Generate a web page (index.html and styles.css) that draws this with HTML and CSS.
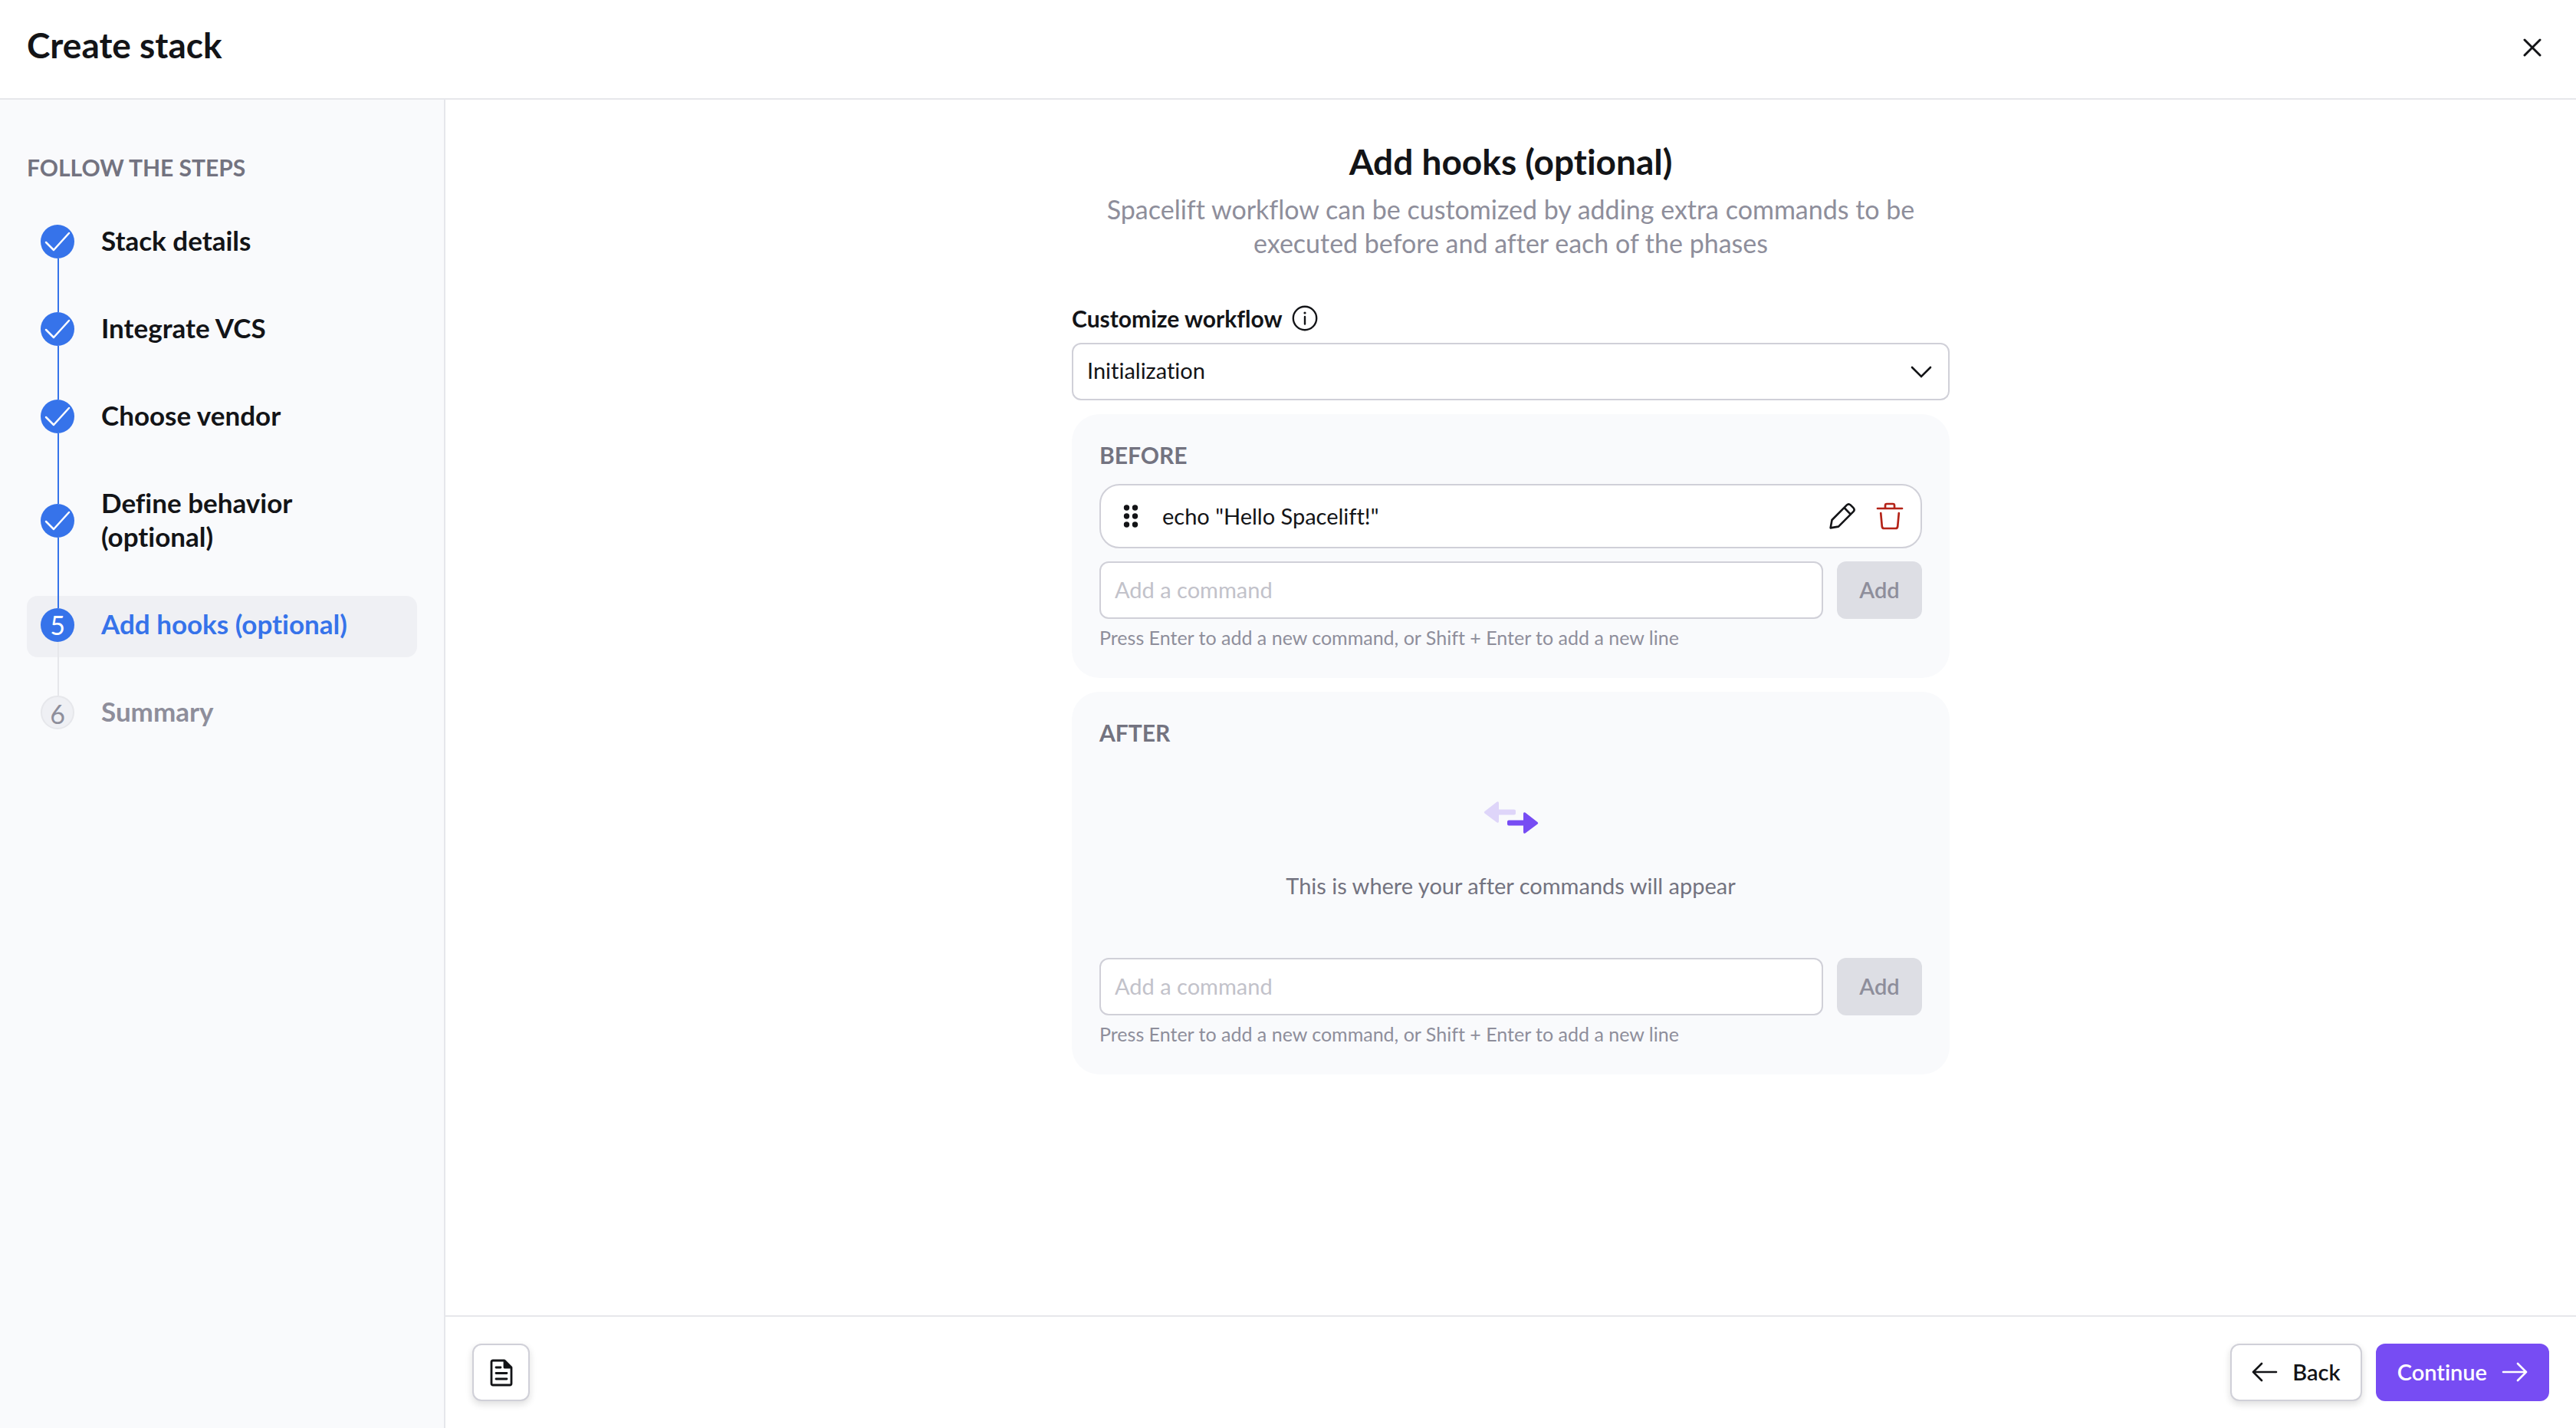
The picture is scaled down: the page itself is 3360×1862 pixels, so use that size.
FILE: index.html
```html
<!DOCTYPE html>
<html lang="en">
<head>
<meta charset="utf-8">
<meta name="viewport" content="width=device-width, initial-scale=1">
<title>Create stack</title>
<link rel="stylesheet" href="styles.css">
</head>
<body>
<div class="page">
  <header class="topbar">
    <h1 class="title">Create stack</h1>
    <button class="close" type="button" aria-label="Close">
      <svg width="24" height="24" viewBox="0 0 24 24" fill="none" stroke="currentColor" stroke-width="3" stroke-linecap="round"><path d="M2 2l20 20M22 2L2 22"/></svg>
    </button>
  </header>

  <div class="layout">
    <nav class="sidebar" aria-label="Steps">
      <h2 class="overline">FOLLOW THE STEPS</h2>
      <ol class="steps">
        <li class="step done">
          <span class="marker"><svg width="34" height="26" viewBox="0 0 34 26"><path d="M2 14l10 10L32 2"/></svg></span>
          <span class="step-label">Stack details</span>
        </li>
        <li class="step done">
          <span class="marker"><svg width="34" height="26" viewBox="0 0 34 26"><path d="M2 14l10 10L32 2"/></svg></span>
          <span class="step-label">Integrate VCS</span>
        </li>
        <li class="step done">
          <span class="marker"><svg width="34" height="26" viewBox="0 0 34 26"><path d="M2 14l10 10L32 2"/></svg></span>
          <span class="step-label">Choose vendor</span>
        </li>
        <li class="step done tall">
          <span class="marker"><svg width="34" height="26" viewBox="0 0 34 26"><path d="M2 14l10 10L32 2"/></svg></span>
          <span class="step-label">Define behavior<br>(optional)</span>
        </li>
        <li class="step current" aria-current="step">
          <span class="marker">5</span>
          <span class="step-label">Add hooks (optional)</span>
        </li>
        <li class="step upcoming">
          <span class="marker">6</span>
          <span class="step-label">Summary</span>
        </li>
      </ol>
    </nav>

    <main class="main">
      <form class="form" id="hooks">
        <h2 class="title">Add hooks (optional)</h2>
        <p class="lead">Spacelift workflow can be customized by adding extra commands to be<br>executed before and after each of the phases</p>

        <div class="field-head">
          <label for="phase">Customize workflow</label>
          <svg width="34" height="34" viewBox="0 0 34 34" fill="none" stroke="currentColor" stroke-width="2.4" stroke-linecap="round"><circle cx="17" cy="17" r="15.2"/><path d="M17 15v9.500"/><circle cx="17" cy="10" r="1.600" fill="currentColor" stroke="none"/></svg>
        </div>
        <div class="select">
          <select id="phase"><option>Initialization</option></select>
          <svg class="chevron" width="28" height="18" viewBox="0 0 28 18" fill="none" stroke="currentColor" stroke-width="2.600" stroke-linecap="round"><path d="M2 3l12 12L26 3"/></svg>
        </div>

        <section class="card">
          <h3 class="overline">BEFORE</h3>
          <div class="command">
            <svg width="20" height="32" viewBox="0 0 20 32" fill="currentColor"><circle cx="4.500" cy="5" r="3.700"/><circle cx="15.500" cy="5" r="3.700"/><circle cx="4.500" cy="16" r="3.700"/><circle cx="15.500" cy="16" r="3.700"/><circle cx="4.500" cy="27" r="3.700"/><circle cx="15.500" cy="27" r="3.700"/></svg>
            <span class="command-text">echo "Hello Spacelift!"</span>
            <button class="icon-button" type="button" aria-label="Edit">
              <svg width="36" height="36" viewBox="0 0 36 36" fill="none" stroke="currentColor" stroke-width="2.600" stroke-linejoin="round"><path d="M2.600 33.400L4.500 23 24 3.400q2.200-2.200 4.600 0L32.400 7.200q2.400 2.400 0 5L13 31.600z M20.500 7L28.800 15.600"/></svg>
            </button>
            <button class="icon-button danger" type="button" aria-label="Delete">
              <svg width="36" height="36" viewBox="0 0 36 36" fill="none" stroke="currentColor" stroke-width="2.700" stroke-linecap="round" stroke-linejoin="round"><path d="M2 8h32M12 8V4q0-2 2-2h8q2 0 2 2v4M6.200 14l1.600 17.500q.3 2.500 2.700 2.500h15q2.400 0 2.700-2.500L29.800 14"/></svg>
            </button>
          </div>
          <div class="entry">
            <input type="text" aria-label="Before command" placeholder="Add a command">
            <button class="button disabled" type="button" disabled>Add</button>
          </div>
          <p class="hint">Press Enter to add a new command, or Shift + Enter to add a new line</p>
        </section>

        <section class="card">
          <h3 class="overline">AFTER</h3>
          <div class="empty">
            <svg width="72" height="44" viewBox="0 0 72 44"><path fill="#ded5f9" d="M1.500 14L17.600 1.600Q20 .5 20 3v8.500h20q2 0 2 2v3q0 2-2 2H20V27q0 2.500-2.400 1.400L1.500 16.500q-1.500-1.200 0-2.500z"/><path fill="#774cf3" d="M70.500 28L54.400 15.600Q52 14.500 52 17v8.500H33q-2 0-2 2v3q0 2 2 2h19V41q0 2.500 2.400 1.400L70.500 30.500q1.500-1.200 0-2.500z"/></svg>
            <p>This is where your after commands will appear</p>
          </div>
          <div class="entry">
            <input type="text" aria-label="After command" placeholder="Add a command">
            <button class="button disabled" type="button" disabled>Add</button>
          </div>
          <p class="hint">Press Enter to add a new command, or Shift + Enter to add a new line</p>
        </section>
      </form>

      <footer class="footer">
        <button class="button outline square" type="button" aria-label="Documentation">
          <svg width="30" height="36" viewBox="0 0 30 36" fill="none" stroke="currentColor" stroke-width="2.800" stroke-linecap="round" stroke-linejoin="round"><path d="M4 2h15l9 9v21q0 2-2 2H4q-2 0-2-2V4q0-2 2-2zM8 11h6M8 18.500h14M8 26h14"/><path fill="currentColor" d="M19 2.500V11h8.500z"/></svg>
        </button>
        <div class="actions">
          <button class="button outline" type="button">
            <svg width="34" height="26" viewBox="0 0 34 26" fill="none" stroke="currentColor" stroke-width="2.600" stroke-linecap="round" stroke-linejoin="round"><path d="M32 13H2M13 2L2 13l11 11"/></svg>
            Back
          </button>
          <button class="button primary" type="submit" form="hooks">
            Continue
            <svg width="34" height="26" viewBox="0 0 34 26" fill="none" stroke="currentColor" stroke-width="2.600" stroke-linecap="round" stroke-linejoin="round"><path d="M2 13h30M21 2l11 11-11 11"/></svg>
          </button>
        </div>
      </footer>
    </main>
  </div>
</div>
</body>
</html>
```
FILE: styles.css
```css
:root {
  --ink: #131417;
  --gray: #737380;
  --muted: #8e8e9b;
  --line: #e6e7eb;
  --border: #d0d0d8;
  --surface: #f9fafc;
  --blue: #3673ea;
  --purple: #774cf3;
}

* { box-sizing: border-box; }

body {
  margin: 0;
  background: #fff;
  color: var(--ink);
  font: 29px/40px Lato, "Noto Sans", sans-serif;
  font-variant-ligatures: no-common-ligatures;
}

h1, h2, h3, p, ol { margin: 0; padding: 0; }
svg { display: block; flex: none; }

button, input, select {
  margin: 0;
  font: inherit;
  font-variant-ligatures: inherit;
  color: inherit;
}

.page {
  display: flex;
  flex-direction: column;
  min-height: 100vh;
}

.title {
  font-size: 46px;
  line-height: 60px;
  font-weight: 700;
}

.overline {
  font-size: 30px;
  line-height: 40px;
  font-weight: 700;
  color: var(--gray);
}

.topbar {
  display: flex;
  justify-content: space-between;
  align-items: flex-start;
  padding: 29px 35px 33px;
  border-bottom: 2px solid var(--line);
}

.close {
  display: grid;
  place-items: center;
  width: 44px;
  height: 66px;
  padding: 0;
  border: 0;
  background: none;
}

.layout {
  flex: 1;
  display: flex;
}

/* Step list */

.sidebar {
  flex: none;
  width: 581px;
  padding: 68px 35px;
  background: var(--surface);
  border-right: 2px solid var(--line);
}

.steps {
  display: flex;
  flex-direction: column;
  gap: 34px;
  margin-top: 39px;
  list-style: none;
}

.step {
  position: relative;
  display: flex;
  align-items: center;
  gap: 35px;
  padding: 14px 18px 18px;
  border-radius: 14px;
  font-size: 34px;
  line-height: 44px;
}

.step-label {
  padding-bottom: 4px;
  font-size: 35px;
  font-weight: 700;
}

.marker {
  display: grid;
  place-items: center;
  flex: none;
  width: 44px;
  height: 44px;
  border-radius: 50%;
  background: var(--blue);
  color: #fff;
}

.marker svg {
  fill: none;
  stroke: #fff;
  stroke-width: 2.5;
  stroke-linecap: round;
  stroke-linejoin: round;
}

/* Connector from this marker down to the next one */
.step:not(:last-child)::after {
  content: "";
  position: absolute;
  z-index: 1;
  left: 40px;
  top: calc(50% + 20px);
  width: 2px;
  height: 70px;
  background: var(--blue);
}

.step:nth-child(3)::after,
.step.tall::after { height: 92px; }

.step.current {
  background: #eff0f4;
  color: var(--blue);
}

.step.current::after { background: var(--line); }
.step.upcoming { color: var(--muted); }

.upcoming .marker {
  border: 2px solid var(--line);
  background: #eff0f4;
  color: var(--muted);
}

/* Form */

.main {
  flex: 1;
  display: flex;
  flex-direction: column;
  min-width: 0;
}

.form {
  flex: 1;
  width: 100%;
  max-width: 1145px;
  margin: 0 auto;
  padding: 51px 0;
}

.form > .title { text-align: center; }

.lead {
  margin-top: 10px;
  font-size: 34px;
  line-height: 44px;
  text-align: center;
  color: var(--muted);
}

.field-head {
  display: flex;
  align-items: center;
  gap: 12px;
  margin-top: 56px;
  font-size: 30px;
  font-weight: 700;
}

.select {
  display: grid;
  align-items: center;
  margin-top: 12px;
}

.select > * { grid-area: 1 / 1; }

.select select,
.entry input {
  width: 100%;
  height: 75px;
  padding: 0 18px 3px;
  border: 2px solid var(--border);
  border-radius: 12px;
  background: #fff;
}

.select select { appearance: none; }

.chevron {
  justify-self: end;
  margin-right: 23px;
  pointer-events: none;
}

.card {
  margin-top: 18px;
  padding: 33px 36px 37px;
  border-radius: 36px;
  background: var(--surface);
}

.command {
  display: flex;
  align-items: center;
  gap: 26px;
  height: 84px;
  margin-top: 18px;
  padding: 0 22px 0 29px;
  border: 2px solid var(--border);
  border-radius: 26px;
  background: #fff;
}

.command-text {
  flex: 1;
  padding-left: 5px;
}

.icon-button {
  padding: 0;
  border: 0;
  background: none;
}

.danger { color: #b42318; }

.entry {
  display: flex;
  gap: 18px;
  margin-top: 17px;
}

.entry input {
  flex: 1;
  min-width: 0;
}

.entry input::placeholder {
  color: #c2c2ca;
  opacity: 1;
}

.hint {
  margin-top: 8px;
  font-size: 25px;
  line-height: 32px;
  color: var(--muted);
}

.empty {
  display: flex;
  flex-direction: column;
  align-items: center;
  gap: 47px;
  padding: 69px 0 57px;
  color: var(--gray);
}

/* Buttons */

.button {
  display: flex;
  align-items: center;
  justify-content: center;
  gap: 19px;
  height: 75px;
  padding: 0 28px 2px;
  border: 0;
  border-radius: 12px;
  font-weight: 600;
}

.disabled {
  min-width: 111px;
  background: #dddee4;
  color: var(--muted);
}

.outline {
  padding: 0 26px 2px;
  border: 2px solid var(--border);
  background: #fff;
  box-shadow: 0 4px 10px rgba(19, 20, 23, .14);
}

.square {
  width: 75px;
  padding: 0;
}

.primary {
  background: var(--purple);
  color: #fff;
}

.footer {
  display: flex;
  justify-content: space-between;
  padding: 35px;
  border-top: 2px solid var(--line);
}

.actions {
  display: flex;
  gap: 18px;
}
```
